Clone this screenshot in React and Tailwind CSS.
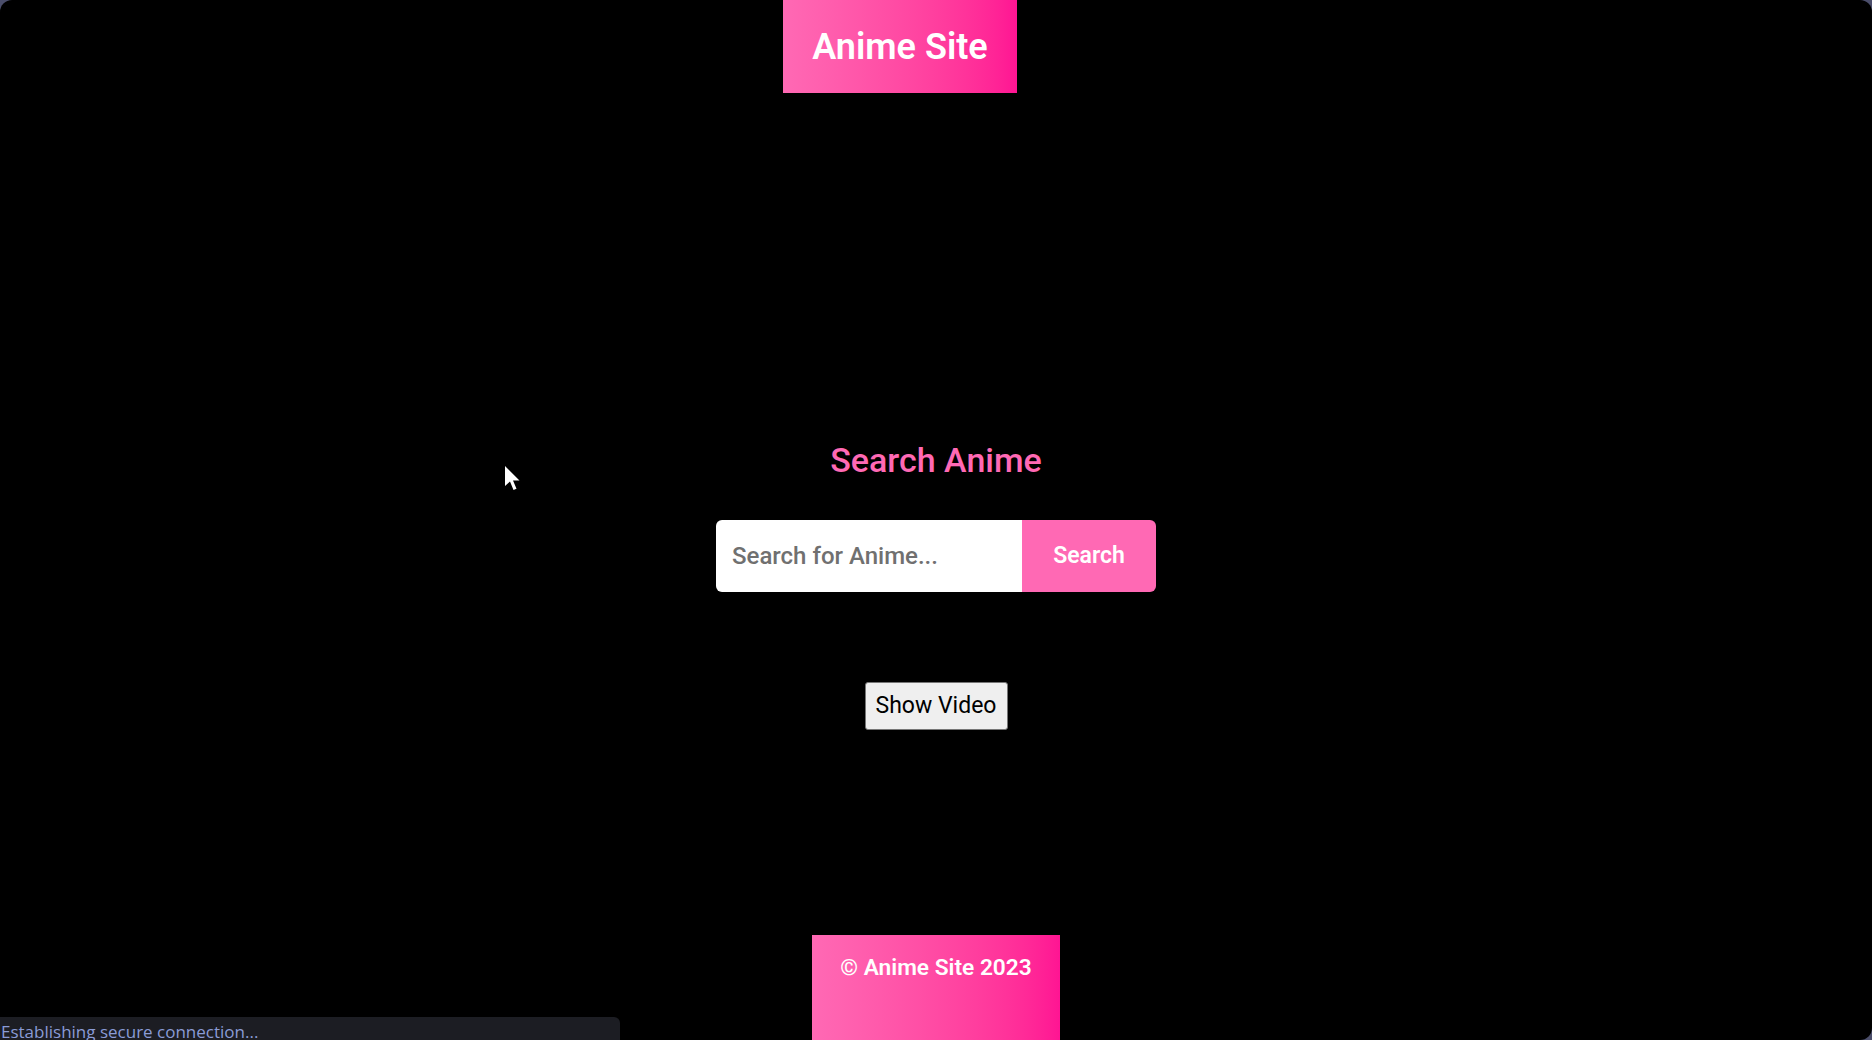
export default function App() {
    return (
        <div className="relative w-[1872px] h-[1040px] overflow-hidden bg-[#4b4e6b]" style={{ fontFamily: 'Roboto, "Liberation Sans", sans-serif' }}>
            <div className="flex flex-col items-center h-full bg-black rounded-[12px] overflow-hidden">
                {/* Header */}
                <header className="shrink-0 self-start ml-[783px] w-[234px] h-[93px] flex items-center justify-center bg-gradient-to-r from-[#ff69b4] to-[#ff1493]">
                    <h1 className="text-white text-[36px] font-semibold leading-none">Anime Site</h1>
                </header>

                {/* Search */}
                <h2 className="shrink-0 mt-[350px] text-[#ff69b4] text-[34px] font-medium leading-[35px]">Search Anime</h2>
                <div className="shrink-0 mt-[42px] flex h-[72px] rounded-[6px] overflow-hidden">
                    <input
                        type="text"
                        placeholder="Search for Anime..."
                        className="w-[306px] h-full bg-white px-4 text-[24px] font-medium text-black placeholder-[#707070] outline-none"
                    />
                    <button className="w-[134px] h-full bg-[#ff69b4] text-white text-[23px] font-semibold">
                        Search
                    </button>
                </div>

                <button className="shrink-0 mt-[90px] w-[143px] h-[48px] bg-[#efefef] border border-[#767676] rounded-[3px] text-black text-[23px] font-normal">
                    Show Video
                </button>

                {/* Footer */}
                <footer className="shrink-0 mt-[205px] w-[248px] h-[120px] pt-[22px] text-center bg-gradient-to-r from-[#ff69b4] to-[#ff1493]">
                    <p className="text-white text-[22.7px] font-semibold leading-none">© Anime Site 2023</p>
                </footer>
            </div>

            {/* Browser status bubble */}
            <div className="absolute left-0 bottom-0 w-[620px] h-[23px] bg-[#1c1d23] rounded-tr-[6px] overflow-hidden">
                <span className="block pt-[6px] pl-[1px] text-[#8a9bd6] text-[17px] leading-none" style={{ fontFamily: '"Open Sans", "Noto Sans", sans-serif' }}>
                    Establishing secure connection...
                </span>
            </div>

            {/* Mouse cursor */}
            <svg className="absolute left-[505px] top-[466px]" width="18" height="28" viewBox="0 0 18 28">
                <path d="M0 0 L0 20 L5 15.5 L8.5 24 L11.5 22.8 L8 14.5 L14.5 14.5 Z" fill="white" />
            </svg>
        </div>
    );
}
